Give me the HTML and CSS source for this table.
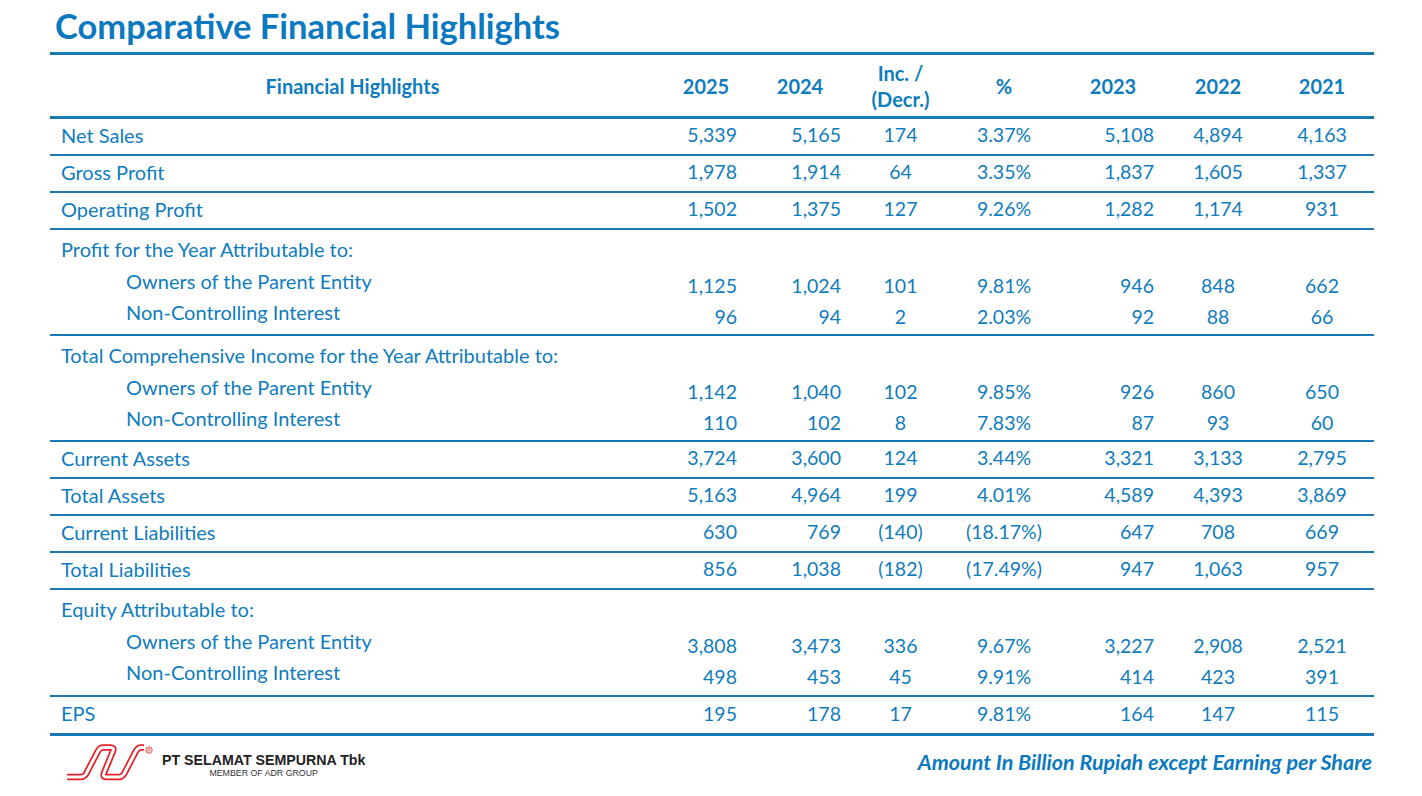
FILE: index.html
```html
<!DOCTYPE html>
<html>
<head>
<meta charset="utf-8">
<link rel="stylesheet" href="styles.css">
</head>
<body>
<div class="page">
  <h1 class="title">Comparative Financial Highlights</h1>
  <div class="table">
    <div class="row head">
      <div class="cell lbl-h">Financial Highlights</div>
      <div class="cell c1">2025</div>
      <div class="cell c2">2024</div>
      <div class="cell c3">Inc. /<br>(Decr.)</div>
      <div class="cell c4">%</div>
      <div class="cell c5">2023</div>
      <div class="cell c6">2022</div>
      <div class="cell c7">2021</div>
    </div>

    <div class="row single">
      <div class="cell lbl">Net Sales</div>
      <div class="cell c1">5,339</div><div class="cell c2">5,165</div><div class="cell c3">174</div><div class="cell c4">3.37%</div><div class="cell c5">5,108</div><div class="cell c6">4,894</div><div class="cell c7">4,163</div>
    </div>
    <div class="row single">
      <div class="cell lbl">Gross Profit</div>
      <div class="cell c1">1,978</div><div class="cell c2">1,914</div><div class="cell c3">64</div><div class="cell c4">3.35%</div><div class="cell c5">1,837</div><div class="cell c6">1,605</div><div class="cell c7">1,337</div>
    </div>
    <div class="row single">
      <div class="cell lbl">Operating Profit</div>
      <div class="cell c1">1,502</div><div class="cell c2">1,375</div><div class="cell c3">127</div><div class="cell c4">9.26%</div><div class="cell c5">1,282</div><div class="cell c6">1,174</div><div class="cell c7">931</div>
    </div>

    <div class="group">
      <div class="gh">Profit for the Year Attributable to:</div>
      <div class="row sub">
        <div class="cell lbl ind">Owners of the Parent Entity</div>
        <div class="cell c1">1,125</div><div class="cell c2">1,024</div><div class="cell c3">101</div><div class="cell c4">9.81%</div><div class="cell c5">946</div><div class="cell c6">848</div><div class="cell c7">662</div>
      </div>
      <div class="row sub">
        <div class="cell lbl ind">Non-Controlling Interest</div>
        <div class="cell c1">96</div><div class="cell c2">94</div><div class="cell c3">2</div><div class="cell c4">2.03%</div><div class="cell c5">92</div><div class="cell c6">88</div><div class="cell c7">66</div>
      </div>
    </div>

    <div class="group">
      <div class="gh">Total Comprehensive Income for the Year Attributable to:</div>
      <div class="row sub">
        <div class="cell lbl ind">Owners of the Parent Entity</div>
        <div class="cell c1">1,142</div><div class="cell c2">1,040</div><div class="cell c3">102</div><div class="cell c4">9.85%</div><div class="cell c5">926</div><div class="cell c6">860</div><div class="cell c7">650</div>
      </div>
      <div class="row sub">
        <div class="cell lbl ind">Non-Controlling Interest</div>
        <div class="cell c1">110</div><div class="cell c2">102</div><div class="cell c3">8</div><div class="cell c4">7.83%</div><div class="cell c5">87</div><div class="cell c6">93</div><div class="cell c7">60</div>
      </div>
    </div>

    <div class="row single">
      <div class="cell lbl">Current Assets</div>
      <div class="cell c1">3,724</div><div class="cell c2">3,600</div><div class="cell c3">124</div><div class="cell c4">3.44%</div><div class="cell c5">3,321</div><div class="cell c6">3,133</div><div class="cell c7">2,795</div>
    </div>
    <div class="row single">
      <div class="cell lbl">Total Assets</div>
      <div class="cell c1">5,163</div><div class="cell c2">4,964</div><div class="cell c3">199</div><div class="cell c4">4.01%</div><div class="cell c5">4,589</div><div class="cell c6">4,393</div><div class="cell c7">3,869</div>
    </div>
    <div class="row single">
      <div class="cell lbl">Current Liabilities</div>
      <div class="cell c1">630</div><div class="cell c2">769</div><div class="cell c3">(140)</div><div class="cell c4">(18.17%)</div><div class="cell c5">647</div><div class="cell c6">708</div><div class="cell c7">669</div>
    </div>
    <div class="row single">
      <div class="cell lbl">Total Liabilities</div>
      <div class="cell c1">856</div><div class="cell c2">1,038</div><div class="cell c3">(182)</div><div class="cell c4">(17.49%)</div><div class="cell c5">947</div><div class="cell c6">1,063</div><div class="cell c7">957</div>
    </div>

    <div class="group tall">
      <div class="gh">Equity Attributable to:</div>
      <div class="row sub">
        <div class="cell lbl ind">Owners of the Parent Entity</div>
        <div class="cell c1">3,808</div><div class="cell c2">3,473</div><div class="cell c3">336</div><div class="cell c4">9.67%</div><div class="cell c5">3,227</div><div class="cell c6">2,908</div><div class="cell c7">2,521</div>
      </div>
      <div class="row sub">
        <div class="cell lbl ind">Non-Controlling Interest</div>
        <div class="cell c1">498</div><div class="cell c2">453</div><div class="cell c3">45</div><div class="cell c4">9.91%</div><div class="cell c5">414</div><div class="cell c6">423</div><div class="cell c7">391</div>
      </div>
    </div>

    <div class="row single last">
      <div class="cell lbl">EPS</div>
      <div class="cell c1">195</div><div class="cell c2">178</div><div class="cell c3">17</div><div class="cell c4">9.81%</div><div class="cell c5">164</div><div class="cell c6">147</div><div class="cell c7">115</div>
    </div>
  </div>

  <div class="footer">
    <div class="brand">
      <svg class="logo" width="90" height="42" viewBox="0 0 90 42">
        <g fill="none" stroke-linejoin="round" stroke-linecap="butt">
          <path d="M3,36 H17 Q20,36 22,33 L34,10 Q36,6.5 39,6.5 H47 Q50.5,6.5 49,10 L40,32 Q38.5,36 42,36 H55 Q58,36 60,33 L72,10 Q74,6.5 77,6.5 H80" stroke="#e3232a" stroke-width="6.5"/>
          <path d="M3,36 H17 Q20,36 22,33 L34,10 Q36,6.5 39,6.5 H47 Q50.5,6.5 49,10 L40,32 Q38.5,36 42,36 H55 Q58,36 60,33 L72,10 Q74,6.5 77,6.5 H80" stroke="#fff" stroke-width="3"/>
        </g>
        <circle cx="85" cy="9" r="3.2" fill="none" stroke="#e3232a" stroke-width="0.8"/>
        <text x="85" y="10.8" font-size="5" text-anchor="middle" fill="#e3232a" font-family="Liberation Sans, sans-serif">R</text>
      </svg>
      <div class="brand-text">
        <div class="brand-name">PT SELAMAT SEMPURNA Tbk</div>
        <div class="brand-sub">MEMBER OF ADR GROUP</div>
      </div>
    </div>
    <div class="note">Amount In Billion Rupiah except Earning per Share</div>
  </div>
</div>
</body>
</html>
```

FILE: styles.css
```css
html, body {
  margin: 0;
  padding: 0;
  background: #ffffff;
}

.page {
  width: 1422px;
  height: 796px;
  box-sizing: border-box;
  padding: 0 48px 0 50px;
  font-family: Lato, "Open Sans", sans-serif;
  color: #0f7cbd;
}

.title {
  margin: 0;
  padding: 6px 0 0 5px;
  height: 52px;
  box-sizing: border-box;
  font-size: 34.5px;
  font-weight: 700;
  line-height: 40px;
  color: #0b79bf;
}

.table {
  width: 1324px;
  border-top: 3px solid #1a78b6;
}

.row {
  display: grid;
  grid-template-columns: 605px 102px 86px 115px 92px 116px 104px 104px;
  font-size: 19.5px;
}

.head {
  height: 61px;
  align-items: center;
  border-bottom: 3px solid #1a78b6;
  font-weight: 700;
  font-size: 20px;
  line-height: 26px;
}

.head .cell {
  text-align: center;
  padding-right: 0;
}
.head .c5 { padding-left: 10px; }

.lbl-h {
  padding-left: 0;
}

.single {
  height: 35px;
  align-items: center;
  border-bottom: 2px solid #1a78b6;
}
.single .cell {
  padding-bottom: 4px;
}

.single.last {
  border-bottom: 3px solid #1a78b6;
  height: 36px;
}

.group {
  border-bottom: 2px solid #1a78b6;
  padding-bottom: 4px;
}
.group.tall {
  padding-bottom: 5px;
}

.gh {
  height: 38px;
  line-height: 38px;
  padding-left: 11px;
  font-size: 20px;
}

.sub {
  height: 31px;
  align-items: start;
  line-height: 23px;
}
.sub .cell { padding-top: 6px; }
.sub .lbl { padding-top: 2px; }

.lbl {
  padding-left: 11px;
  font-size: 20px;
}
.ind {
  padding-left: 76px;
}

.c1 { text-align: right; padding-right: 20px; }
.c2 { text-align: right; padding-right: 2px; }
.c3 { text-align: center; }
.c4 { text-align: center; }
.c5 { text-align: right; padding-right: 12px; }
.c6 { text-align: center; }
.c7 { text-align: center; }

.footer {
  display: flex;
  justify-content: space-between;
  align-items: flex-start;
  padding: 5px 2px 0 14px;
  width: 1324px;
  box-sizing: border-box;
}

.brand {
  display: flex;
  align-items: flex-start;
}

.logo {
  display: block;
}

.brand-text {
  margin-left: 8px;
  padding-top: 11px;
  font-family: "Liberation Sans", Arial, sans-serif;
  color: #222;
  text-align: center;
}

.brand-name {
  font-size: 14.2px;
  font-weight: 700;
  line-height: 16px;
}

.brand-sub {
  font-size: 8.8px;
  line-height: 10px;
  color: #333;
}

.note {
  font-size: 21.5px;
  font-weight: 700;
  font-style: italic;
  color: #0b79bf;
  padding-top: 8px;
  line-height: 26px;
}
```
